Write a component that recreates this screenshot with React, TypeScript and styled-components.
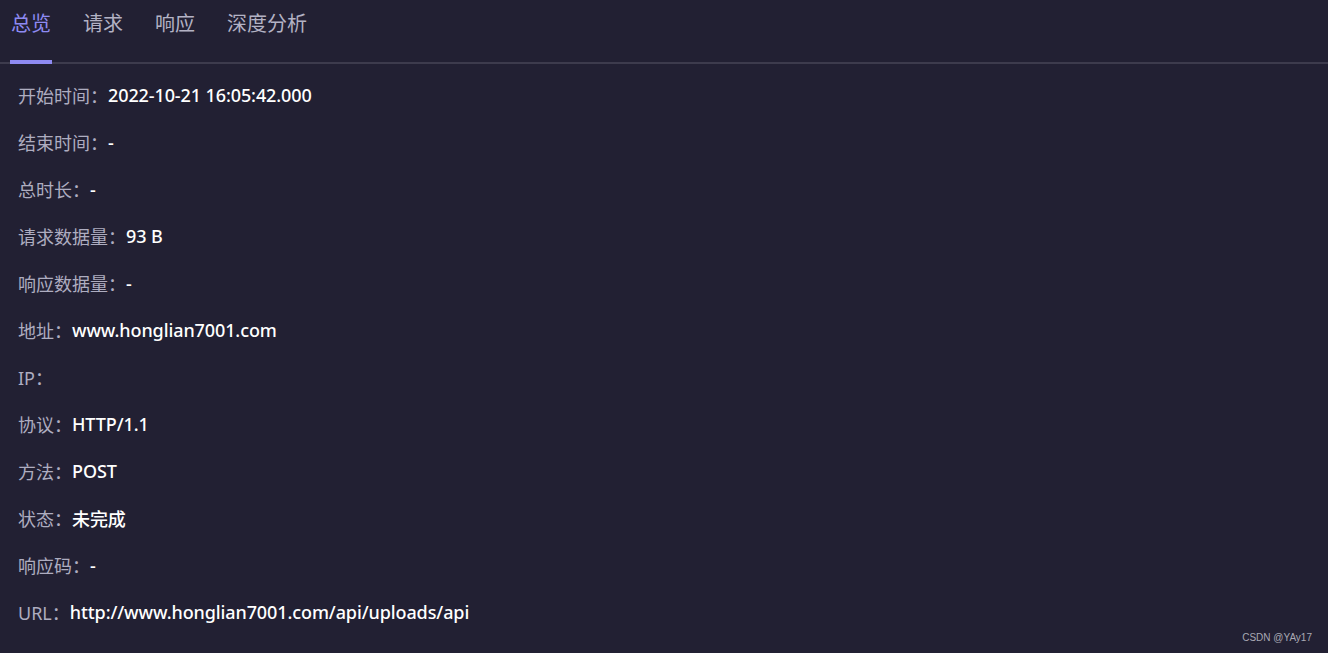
import React from "react";
import styled, { createGlobalStyle } from "styled-components";

const Global = createGlobalStyle`
  html, body { margin: 0; padding: 0; background: #222033; }
  body { font-family: "Noto Sans", "Noto Sans CJK SC", sans-serif; }
`;

const Page = styled.div`
  position: relative;
  width: 1328px;
  height: 653px;
  background: #222033;
  overflow: hidden;
`;

const TabBar = styled.div`
  display: flex;
  align-items: flex-end;
  height: 64px;
  padding-left: 10px;
  box-shadow: inset 0 -2px 0 #3d3b4d;
  box-sizing: border-box;
`;

const Tab = styled.div<{ $active?: boolean }>`
  height: 64px;
  box-sizing: border-box;
  padding: 9px 1px 0;
  margin-right: 30px;
  font-family: "Noto Sans CJK SC", sans-serif;
  font-size: 20px;
  line-height: 28px;
  color: ${(p) => (p.$active ? "#8e8af2" : "#b3b2c4")};
  border-bottom: 4px solid ${(p) => (p.$active ? "#8e8af2" : "transparent")};
`;

const Rows = styled.div`
  display: flex;
  flex-direction: column;
  padding: 7px 18px 0;
`;

const Row = styled.div`
  display: flex;
  align-items: center;
  height: 47px;
  font-size: 18px;
  white-space: nowrap;
`;

const Label = styled.span`
  color: #aeadc0;
  font-family: "Noto Sans", "Noto Sans CJK SC", sans-serif;
`;

const Value = styled.span`
  color: #ffffff;
  font-weight: 500;
  letter-spacing: -0.1px;
  font-family: "Noto Sans", "Noto Sans CJK SC", sans-serif;
`;

const Watermark = styled.div`
  position: absolute;
  right: 16px;
  bottom: 10px;
  font-family: "Liberation Sans", sans-serif;
  font-size: 10px;
  color: #a9a9b4;
`;

const items: [string, string][] = [
  ["开始时间：", "2022-10-21 16:05:42.000"],
  ["结束时间：", "-"],
  ["总时长：", "-"],
  ["请求数据量：", "93 B"],
  ["响应数据量：", "-"],
  ["地址：", "www.honglian7001.com"],
  ["IP：", ""],
  ["协议：", "HTTP/1.1"],
  ["方法：", "POST"],
  ["状态：", "未完成"],
  ["响应码：", "-"],
  ["URL：", "http://www.honglian7001.com/api/uploads/api"],
];

export default function App() {
  return (
    <Page>
      <Global />
      <TabBar>
        <Tab $active>总览</Tab>
        <Tab>请求</Tab>
        <Tab>响应</Tab>
        <Tab>深度分析</Tab>
      </TabBar>
      <Rows>
        {items.map(([l, v]) => (
          <Row key={l}>
            <Label>{l}</Label>
            <Value>{v}</Value>
          </Row>
        ))}
      </Rows>
      <Watermark>CSDN @YAy17</Watermark>
    </Page>
  );
}
